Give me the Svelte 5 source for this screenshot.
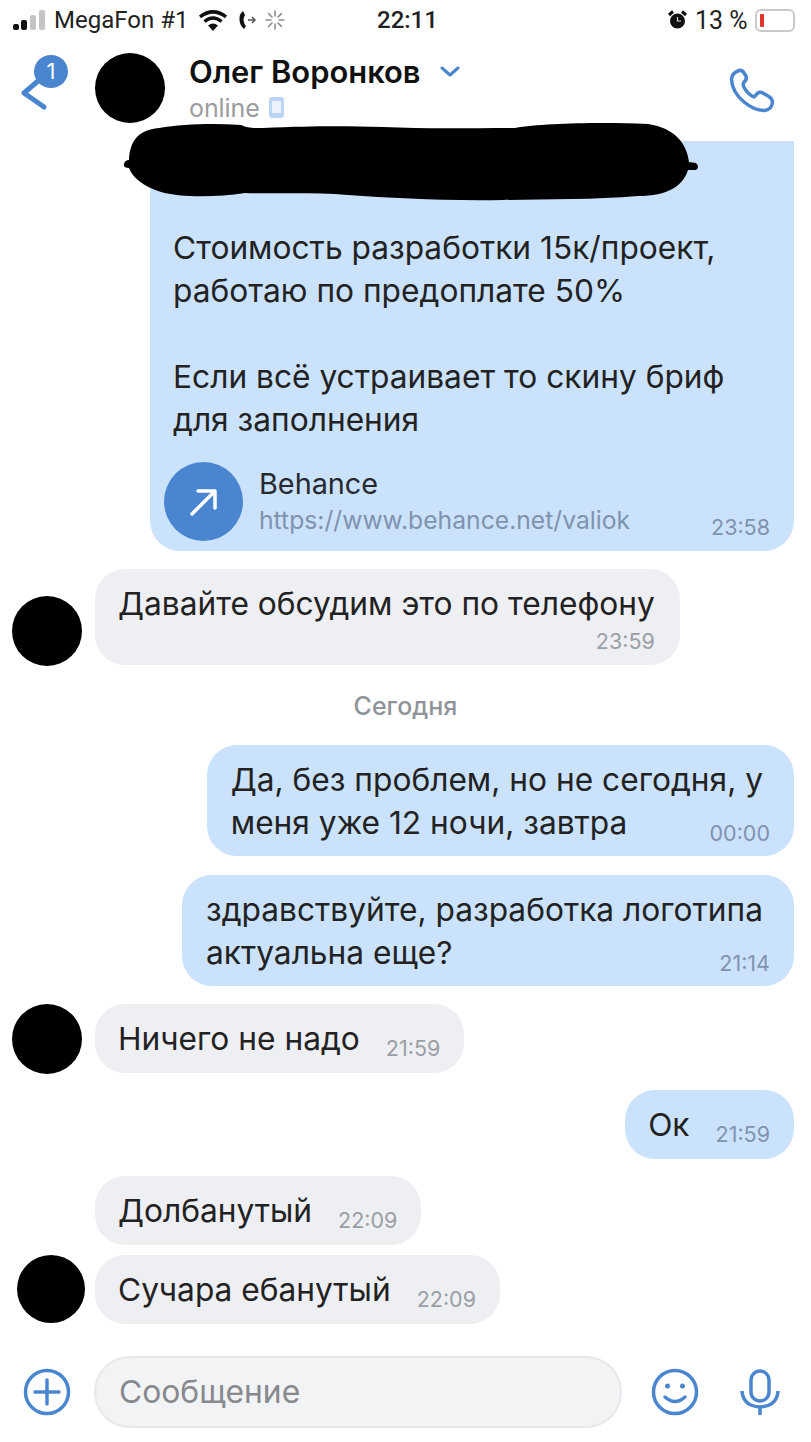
<script>
  const messages = [
    { from: 'in', avatar: true, stacked: true, text: ['Давайте обсудим это по телефону'], time: '23:59', top: 18 },
    { date: 'Сегодня' },
    { from: 'out', text: ['Да, без проблем, но не сегодня, у', 'меня уже 12 ночи, завтра'], time: '00:00', wrap: true, top: 0 },
    { from: 'out', text: ['здравствуйте, разработка логотипа', 'актуальна еще?'], time: '21:14', wrap: true, top: 19 },
    { from: 'in', avatar: true, text: ['Ничего не надо'], time: '21:59', top: 18 },
    { from: 'out', text: ['Ок'], time: '21:59', top: 17 },
    { from: 'in', text: ['Долбанутый'], time: '22:09', top: 17 },
    { from: 'in', avatar: true, shifted: true, text: ['Сучара ебанутый'], time: '22:09', top: 10 }
  ];
</script>

<div class="screen">
  <div class="status">
    <svg class="signal" width="34" height="22" viewBox="0 0 34 22">
      <rect x="0" y="15" width="6" height="6" rx="2" fill="#111" />
      <rect x="8" y="11" width="6" height="10" rx="2" fill="#111" />
      <rect x="17" y="6" width="6" height="15" rx="2" fill="#c4c4c6" />
      <rect x="26" y="1" width="6" height="20" rx="2" fill="#c4c4c6" />
    </svg>
    <span class="carrier">MegaFon #1</span>
    <svg class="wifi" width="30" height="21" viewBox="0 0 30 21">
      <path d="M15 21 L10 15.500 Q15 11.500 20 15.500 Z" fill="#111" />
      <path d="M6.500 11.500 Q15 4.500 23.500 11.500" fill="none" stroke="#111" stroke-width="3.500" />
      <path d="M2 6.800 Q15 -3 28 6.800" fill="none" stroke="#111" stroke-width="3.500" />
    </svg>
    <svg class="call" width="18" height="22" viewBox="0 0 18 22">
      <path d="M5 2 Q1 5 1.500 11 Q2 17 6 20 L8 17 Q6 15 5.500 11 Q5.500 8 7 6 Z" fill="#111" />
      <path d="M10 11 H17 M14 8 L17 11 L14 14" fill="none" stroke="#555" stroke-width="1.500" />
    </svg>
    <svg class="spin" width="20" height="20" viewBox="0 0 20 20" stroke="#8d8d8d" stroke-width="1.600" stroke-linecap="round">
      <path d="M10 1 V6 M10 14 V19 M1 10 H6 M14 10 H19 M3.600 3.600 L7 7 M13 13 L16.400 16.400 M16.400 3.600 L13 7 M7 13 L3.600 16.400" />
    </svg>
    <span class="clock">22:11</span>
    <svg class="alarm" width="19" height="20" viewBox="0 0 19 20">
      <circle cx="9.500" cy="11" r="7.500" fill="#111" />
      <path d="M1 5 L5 1.500 M18 5 L14 1.500" stroke="#111" stroke-width="3" />
      <path d="M9.500 7 V11 H13" fill="none" stroke="#ddd" stroke-width="1.200" />
    </svg>
    <span class="percent">13 %</span>
    <div class="battery"><div class="level"></div></div>
  </div>

  <div class="header">
    <div class="back">
      <svg width="36" height="44" viewBox="0 0 36 44">
        <path d="M25 2 L4 20 L24 34" fill="none" stroke="#4a86cf" stroke-width="5" stroke-linecap="round" stroke-linejoin="round" />
      </svg>
      <span class="badge">1</span>
    </div>
    <div class="avatar"></div>
    <div class="who">
      <div class="name">
        Олег Воронков
        <svg width="20" height="12" viewBox="0 0 20 12">
          <path d="M2 2 L10 9 L18 2" fill="none" stroke="#4a86cf" stroke-width="3" stroke-linecap="round" stroke-linejoin="round" />
        </svg>
      </div>
      <div class="online">
        online
        <svg width="15" height="21" viewBox="0 0 15 21">
          <rect width="15" height="21" rx="3" fill="#bcd5f2" />
          <rect x="3" y="4" width="9" height="12" fill="#eaf2fb" />
        </svg>
      </div>
    </div>
    <svg class="phone" width="46" height="45" viewBox="0 0 46 45">
      <path d="M10 2.500 Q3 5 2.500 11 Q3 24 15 34 Q26 43 36 42.500 Q43 41 43.500 34 Q43 30 39 28 L33 24.500 Q29 23.500 27 27 L25 29 Q20 27 16 21 Q13 17 15 14 Q18 12 17 8 L14 3.500 Q12 2 10 2.500 Z" fill="none" stroke="#4a86cf" stroke-width="3.500" stroke-linejoin="round" />
    </svg>
  </div>

  <div class="chat">
    <div class="row out first">
      <div class="bubble big">
        <p>Стоимость разработки 15к/проект,<br />работаю по предоплате 50%</p>
        <p>Если всё устраивает то скину бриф<br />для заполнения</p>
        <div class="link">
          <span class="round">
            <svg width="32" height="32" viewBox="0 0 32 32">
              <path d="M4 28 L26 6 M10 5 H27 V22" fill="none" stroke="#fff" stroke-width="3.500" stroke-linecap="round" stroke-linejoin="round" />
            </svg>
          </span>
          <span class="link-text">
            <b>Behance</b>
            <i>https://www.behance.net/valiok</i>
          </span>
          <span class="time">23:58</span>
        </div>
      </div>
    </div>

    {#each messages as m}
      {#if m.date}
        <div class="date">{m.date}</div>
      {:else}
        <div class="row {m.from}" class:shifted={m.shifted} style="margin-top: {m.top}px">
          {#if m.from === 'in'}
            {#if m.avatar}
              <div class="avatar small"></div>
            {:else}
              <div class="spacer"></div>
            {/if}
          {/if}
          <div class="bubble" class:stacked={m.stacked} class:wrap={m.wrap}>
            <span class="text">
              {#each m.text as line, i}{#if i > 0}<br />{/if}{line}{/each}
            </span>
            <span class="time">{m.time}</span>
          </div>
        </div>
      {/if}
    {/each}
  </div>

  <div class="composer">
    <svg width="48" height="48" viewBox="0 0 48 48" fill="none" stroke="#4a86cf" stroke-width="3.500">
      <circle cx="24" cy="24" r="21.500" />
      <path d="M24 12 V36 M12 24 H36" stroke-linecap="round" />
    </svg>
    <div class="input">Сообщение</div>
    <svg class="smile" width="48" height="48" viewBox="0 0 48 48" fill="none" stroke="#4a86cf" stroke-width="3.500">
      <circle cx="24" cy="24" r="21.500" />
      <circle cx="16.500" cy="18" r="2.500" fill="#4a86cf" stroke="none" />
      <circle cx="31.500" cy="18" r="2.500" fill="#4a86cf" stroke="none" />
      <path d="M14 29 Q24 38 34 29" stroke-linecap="round" />
    </svg>
    <svg class="mic" width="40" height="46" viewBox="0 0 40 46" fill="none" stroke="#4a86cf" stroke-width="3.500">
      <rect x="11" y="2" width="18" height="30" rx="9" />
      <path d="M2 22 Q3 37 20 38 Q37 37 38 22 M20 38 V46" />
    </svg>
  </div>

  <svg class="scribble" width="576" height="82" viewBox="0 0 576 82">
    <path d="M6 40 C7 22 14 10 36 8 C60 4 90 3 118 5 C125 8 128 8 140 8 C190 6 220 6 260 7 C300 9 350 8 392 8 C420 3 480 2 525 4 C552 8 564 24 566 42 L573 43 Q577 47 573 50 L565 50 C560 66 545 76 515 76 C470 80 420 79 380 80 C320 81 270 78 225 75 C190 72 150 74 122 73 C90 78 55 77 38 72 C20 66 10 58 6 48 Q0 48 1 44 Q2 40 6 40 Z" fill="#000" />
  </svg>
</div>

<style>
  :global(body) {
    background: #fff;
  }

  .screen {
    position: relative;
    width: 811px;
    height: 1442px;
    overflow: hidden;
    background: #fff;
    font-family: Inter, "Noto Sans", sans-serif;
    color: #222;
  }

  .status {
    display: flex;
    align-items: center;
    height: 40px;
    padding: 0 16px 0 13px;
    font-size: 24px;
    color: #222;
  }

  .carrier {
    margin-left: 7px;
    width: 137px;
    font-family: Roboto, sans-serif;
    white-space: nowrap;
  }

  .wifi {
    margin-left: 7px;
  }

  .call {
    margin-left: 10px;
  }

  .spin {
    margin-left: 9px;
  }

  .clock {
    margin-left: 92px;
    width: 60px;
    font-family: Roboto, sans-serif;
    font-weight: 500;
    font-size: 24px;
  }

  .alarm {
    margin-left: 231px;
  }

  .percent {
    margin-left: 8px;
    width: 60px;
    font-size: 25px;
    font-family: Roboto, sans-serif;
    white-space: nowrap;
  }

  .battery {
    width: 40px;
    height: 23px;
    border: 2px solid #c9c9c9;
    border-radius: 6px;
    box-sizing: border-box;
    padding: 3px;
  }

  .level {
    width: 4px;
    height: 100%;
    background: #e0352b;
    border-radius: 1px;
  }

  .header {
    display: flex;
    align-items: flex-start;
    height: 100px;
    padding: 13px 36px 0 20px;
    box-sizing: border-box;
  }

  .back {
    position: relative;
    width: 75px;
    height: 70px;
    padding-top: 20px;
    box-sizing: border-box;
  }

  .badge {
    position: absolute;
    left: 14px;
    top: 2px;
    width: 34px;
    height: 33px;
    border-radius: 50%;
    background: #4a86cf;
    color: #fff;
    font-size: 22px;
    line-height: 33px;
    text-align: center;
  }

  .avatar {
    flex: none;
    width: 70px;
    height: 70px;
    border-radius: 50%;
    background: #000;
  }

  .avatar.small {
    margin-bottom: -1px;
  }

  .row.shifted .avatar {
    width: 68px;
    height: 68px;
    margin: 0 -3px 1px 5px;
  }

  .who {
    flex: 1;
    margin-left: 24px;
  }

  .name {
    display: flex;
    align-items: center;
    gap: 19px;
    height: 37px;
    font-size: 30.900px;
    font-weight: 600;
    color: #111;
    white-space: nowrap;
  }

  .online {
    display: flex;
    align-items: center;
    gap: 9px;
    height: 35px;
    font-size: 25px;
    letter-spacing: -0.1px;
    color: #9a9ca0;
  }

  .phone {
    margin-top: 15px;
  }

  .chat {
    margin-top: 1px;
    display: flex;
    flex-direction: column;
  }

  .row {
    display: flex;
    align-items: flex-end;
  }

  .row.out {
    justify-content: flex-end;
    padding-right: 17px;
  }

  .row.in {
    padding-left: 12px;
    gap: 13px;
  }

  .spacer {
    flex: none;
    width: 70px;
  }

  .bubble {
    display: flex;
    align-items: flex-end;
    gap: 26px;
    padding: 13px 24px 13px 23px;
    border-radius: 30px;
    font-size: 31.700px;
    line-height: 43px;
    white-space: nowrap;
  }

  .out .bubble {
    background: #cbe2fd;
  }

  .in .bubble {
    background: #eeeff3;
  }

  .bubble .time {
    margin-bottom: -3px;
  }

  .bubble.stacked {
    flex-direction: column;
    gap: 0;
    padding: 13px 25px 10px 23px;
  }

  .bubble.stacked .time {
    align-self: flex-end;
    margin: 1px 0 -1px;
  }

  .bubble.wrap {
    display: grid;
    padding: 13px 24px 12px 24px;
  }

  .bubble.wrap .text {
    grid-area: 1 / 1;
    padding-right: 7px;
  }

  .bubble.wrap .time {
    grid-area: 1 / 1;
    justify-self: end;
    margin-bottom: -4px;
  }

  .time {
    font-size: 21.500px;
    line-height: 30px;
    color: #9a9ea5;
  }

  .out .time {
    color: #7f93ad;
  }

  .big {
    display: block;
    width: 644px;
    height: 410px;
    box-sizing: border-box;
    padding: 85px 24px 10px 23px;
    border-radius: 0 0 30px 30px;
  }

  .big p {
    margin: 0 0 43px;
  }

  .link {
    display: flex;
    align-items: flex-end;
    margin: -22px 0 0 -9px;
  }

  .link .time {
    margin-bottom: -1px;
  }

  .round {
    flex: none;
    display: flex;
    align-items: center;
    justify-content: center;
    width: 79px;
    height: 79px;
    border-radius: 50%;
    background: #4a86cf;
  }

  .link-text {
    flex: 1;
    display: flex;
    flex-direction: column;
    margin-left: 16px;
    line-height: 36px;
    padding-bottom: 3px;
  }

  .link-text b {
    font-weight: 400;
    font-size: 28.800px;
    color: #26292e;
  }

  .link-text i {
    font-style: normal;
    font-size: 24.700px;
    color: #7f93ad;
  }

  .date {
    margin: 26px 0 24px;
    height: 30px;
    line-height: 30px;
    text-align: center;
    font-size: 25px;
    font-weight: 500;
    color: #8f949b;
  }

  .composer {
    position: absolute;
    left: 0;
    right: 0;
    bottom: 14px;
    display: flex;
    align-items: center;
    padding: 0 30px 0 23px;
  }

  .input {
    flex: none;
    width: 528px;
    height: 72px;
    margin-left: 23px;
    padding-left: 23px;
    box-sizing: border-box;
    border: 2px solid #e6e8eb;
    border-radius: 36px;
    background: #f2f3f5;
    font-size: 31.800px;
    line-height: 68px;
    color: #87898d;
  }

  .smile {
    margin-left: 29px;
  }

  .mic {
    margin-left: 41px;
  }

  .scribble {
    position: absolute;
    left: 123px;
    top: 120px;
  }
</style>
